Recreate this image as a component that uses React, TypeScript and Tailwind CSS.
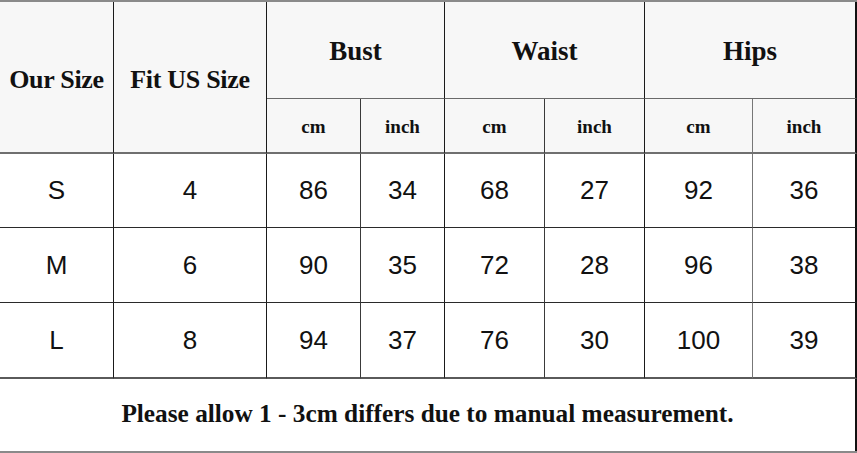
const serif = "font-['Liberation_Serif',serif] font-bold text-[#111]";
const sans = "font-['Liberation_Sans',Arial,sans-serif] text-[26px] text-[#111]";

const rows = [
  ["S", "4", "86", "34", "68", "27", "92", "36"],
  ["M", "6", "90", "35", "72", "28", "96", "38"],
  ["L", "8", "94", "37", "76", "30", "100", "39"],
];

// line color per column (right edge)
const rightLine = [
  "border-r border-[#1a1a1a]",
  "border-r border-[#1a1a1a]",
  "border-r border-[#3a3a3a]",
  "border-r border-[#1a1a1a]",
  "border-r border-[#3a3a3a]",
  "border-r border-[#1a1a1a]",
  "border-r border-r-[#777]",
  "border-r-2 border-r-[#111]",
];

export default function App() {
  return (
    <div className="w-[857px] h-[453px] bg-white border-t-2 border-b-2 border-[#8a8a8a] overflow-hidden">
      <div className="grid grid-cols-[114px_153px_94px_84px_100px_100px_108px_104px] grid-rows-[97px_55px_74px_75px_76px_72px]">
        {/* header */}
        <div className={`row-span-2 bg-[#f7f7f7] flex items-center justify-center border-b-2 border-b-[#6f6f6f] ${rightLine[0]} ${serif} text-[26px] tracking-[-0.3px] pt-1`}>
          Our Size
        </div>
        <div className={`row-span-2 bg-[#f7f7f7] flex items-center justify-center border-b-2 border-b-[#6f6f6f] ${rightLine[1]} ${serif} text-[26px] tracking-[-0.3px] pt-1`}>
          Fit US Size
        </div>
        {["Bust", "Waist", "Hips"].map((g, i) => (
          <div
            key={g}
            className={`col-span-2 bg-[#f7f7f7] flex items-center justify-center border-b border-b-[#6a6a6a] ${i == 2 ? "border-r-2 border-r-[#111]" : "border-r border-[#1a1a1a]"} ${serif} text-[27px] pt-[2px]`}
          >
            {g}
          </div>
        ))}
        {["cm", "inch", "cm", "inch", "cm", "inch"].map((u, i) => (
          <div
            key={i}
            className={`bg-[#f7f7f7] flex items-center justify-center border-b-2 border-b-[#6f6f6f] ${rightLine[i + 2]} ${serif} text-[19px] pt-[3px]`}
          >
            {u}
          </div>
        ))}

        {/* data rows */}
        {rows.map((r, ri) =>
          r.map((v, ci) => (
            <div
              key={ri + "-" + ci}
              className={`flex items-center justify-center ${rightLine[ci]} ${ri == 2 ? "border-b-2 border-b-[#5a5a5a]" : "border-b border-b-[#2a2a2a]"} ${sans}`}
            >
              {v}
            </div>
          ))
        )}

        {/* footer */}
        <div className={`col-span-8 flex items-center justify-center border-r-2 border-r-[#111] ${serif} text-[25.3px] pb-[2px]`}>
          Please allow 1 - 3cm differs due to manual measurement.
        </div>
      </div>
    </div>
  );
}
